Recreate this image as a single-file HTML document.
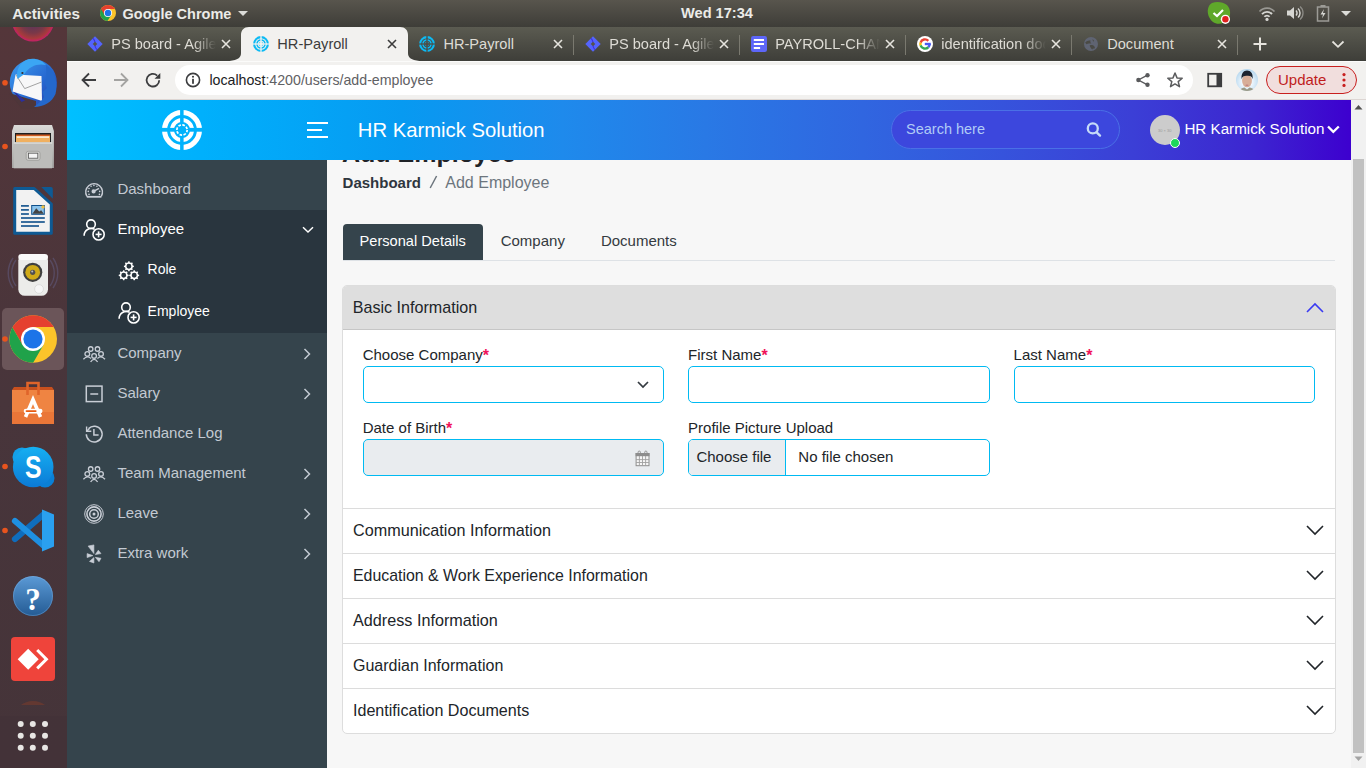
<!DOCTYPE html>
<html><head><meta charset="utf-8">
<style>
*{box-sizing:border-box;margin:0;padding:0}
html,body{width:1366px;height:768px;overflow:hidden;background:#f7f7f7;font-family:"Liberation Sans",sans-serif}
.a{position:absolute}
.t{position:absolute;white-space:nowrap;line-height:1}
.tt{overflow:hidden;line-height:1.2;-webkit-mask-image:linear-gradient(90deg,#000 78%,transparent 100%)}
/* ubuntu top bar */
#topbar{left:0;top:0;width:1366px;height:27px;background:linear-gradient(#58554d,#3e3d38)}
#dock{left:0;top:27px;width:67px;height:741px;background:linear-gradient(#54363a,#48353b 50%,#453439)}
#tabstrip{left:67px;top:27px;width:1299px;height:34px;background:linear-gradient(#5b5b51,#3e3e39)}
#toolbar{left:67px;top:61px;width:1299px;height:39px;background:#f2f1ef;border-top:1px solid #fbfbfa}
/* app */
#hdr{left:67px;top:100px;width:1284px;height:60px;background:linear-gradient(90deg,#00c0ff 0px,#00b0fc 135px,#079af1 335px,#1e8aec 495px,#2979e5 638px,#3066e0 795px,#3653dc 935px,#3b3fd6 1065px,#3c26d0 1185px,#3d00cf 1284px)}
#side{left:67px;top:160px;width:260px;height:608px;background:#35444c}
#content{left:327px;top:160px;width:1024px;height:608px;background:#f7f7f7;overflow:hidden}
#sbar{left:1351px;top:100px;width:15px;height:668px;background:#f1f1f1}
</style></head>
<body>
<div id="topbar" class="a"></div>
<div id="dock" class="a"></div>
<div id="tabstrip" class="a"></div>
<div id="toolbar" class="a"></div>
<div class="a" style="left:67px;top:99px;width:1299px;height:1px;background:#ddd6d3"></div>
<!-- ===== dock ===== -->
<svg class="a" style="left:0;top:27px" width="67" height="741" viewBox="0 0 67 741">
 <defs>
  <radialGradient id="ffx" cx="33" cy="-6.5" r="21" gradientUnits="userSpaceOnUse"><stop offset="0" stop-color="#4a3560"/><stop offset=".6" stop-color="#7a3848"/><stop offset=".86" stop-color="#a83a3c"/><stop offset="1" stop-color="#c81e6a"/></radialGradient>
  <linearGradient id="tbb" x1="0" y1="0" x2="1" y2="1"><stop offset="0" stop-color="#3f9ef0"/><stop offset=".6" stop-color="#2566d0"/><stop offset="1" stop-color="#2a3aa8"/></linearGradient>
  <linearGradient id="fil" x1="0" y1="0" x2="0" y2="1"><stop offset="0" stop-color="#dadad8"/><stop offset="1" stop-color="#a4a4a2"/></linearGradient>
  <linearGradient id="skp" x1="0" y1="0" x2="0" y2="1"><stop offset="0" stop-color="#16b0f2"/><stop offset="1" stop-color="#0b7ad6"/></linearGradient>
  <linearGradient id="hlp" x1="0" y1="0" x2="0" y2="1"><stop offset="0" stop-color="#5b9ad6"/><stop offset="1" stop-color="#245b94"/></linearGradient>
  <linearGradient id="vsc" x1="0" y1="0" x2="1" y2="0"><stop offset="0" stop-color="#0a6fc0"/><stop offset="1" stop-color="#2aa4f0"/></linearGradient>
 </defs>
 <!-- partial top icon -->
 <circle cx="33" cy="-6.5" r="21" fill="url(#ffx)"/>
 <!-- thunderbird -->
 <circle cx="5" cy="55.8" r="2.8" fill="#e8541e"/>
 <g transform="translate(0 -27)">
 <circle cx="33.3" cy="82.7" r="23.6" fill="url(#tbb)"/>
 <path d="M9 93 L22 109 L36 109 L36 101 Z" fill="#4e363a"/>
 <path d="M11.5 89 L21.5 102 L25 100.5 L14 91 Z" fill="#2b2f9e"/>
 <path d="M15.5 74.5 L41.5 76 L42 101 L12.5 91.5 Z" fill="#f7f7f8"/>
 <path d="M15.9 74.7 L24.7 88.6 L41.5 82" fill="none" stroke="#8c8c8c" stroke-width=".8"/>
 <path d="M17.5 79 C15.5 70 20 62 28 59.2 C35 57.5 42 60 46 65 C38 63 29 66 24.5 74 Z" fill="#3ba6f4"/>
 <circle cx="22.4" cy="73" r="1.1" fill="#3a2a2a"/>
 <path d="M46 65 C55 71 58.5 83 55.5 94 C52 102 44 107 34 107 L41 101 L44 97 L42.5 92 L47 88 L44.5 83 L46.5 78 Z" fill="#2468cc"/>
 </g>
 <!-- files -->
 <circle cx="5" cy="119.5" r="2.8" fill="#e8541e"/>
 <path d="M14 98 H52 L53.9 104 V141 H12 V104 Z" fill="url(#fil)"/>
 <rect x="15" y="106" width="36" height="9.5" fill="#1e1e1e"/>
 <rect x="16" y="108" width="34" height="7.5" fill="#f0b060"/>
 <rect x="17" y="109.5" width="32" height="1.2" fill="#fff"/>
 <rect x="16" y="107.5" width="34" height="1.5" fill="#d05a20"/>
 <rect x="13.7" y="115.4" width="38.3" height="25.9" fill="#bcbcba"/>
 <rect x="13.7" y="115.4" width="38.3" height="1.2" fill="#e4e4e2"/>
 <rect x="26.2" y="124.3" width="13.8" height="9" rx="2" fill="#d2d2d0" stroke="#9a9a98" stroke-width=".8"/>
 <rect x="28.4" y="126.2" width="9.4" height="5" fill="#f4f4f4" stroke="#555" stroke-width=".8"/>
 <!-- writer -->
 <path d="M14.7 161.5 H34.2 L51.3 177 V206.2 H14.7 Z" fill="#f2f2f2" stroke="#0e5a94" stroke-width="3" stroke-linejoin="round"/>
 <path d="M41.3 160 H51 Q52.8 160 52.8 162 V171.8 Z" fill="#0e5a94"/>
 <g fill="#0e4f8a"><rect x="21" y="178.1" width="7.9" height="1.6"/><rect x="21" y="182.1" width="7.9" height="1.6"/><rect x="21" y="186.2" width="7.9" height="1.6"/>
 <rect x="21" y="190.2" width="23.8" height="1.6"/><rect x="21" y="194.2" width="23.8" height="1.6"/><rect x="21" y="198.2" width="18" height="1.6"/>
 <rect x="31.2" y="178" width="13.6" height="9.8"/></g>
 <rect x="32.2" y="179" width="11.6" height="7.8" fill="#8cc4ec"/>
 <path d="M32.4 186.8 L36.2 181.2 L39.2 184.6 L41.2 183.2 L43.8 186.8 Z" fill="#444"/>
 <circle cx="43" cy="179.9" r="1.7" fill="#f0c040"/>
 <!-- speaker -->
 <path d="M16 233 A22 22 0 0 0 16 259 M13 231 A26 26 0 0 0 13 261 M50 233 A22 22 0 0 1 50 259 M53 231 A26 26 0 0 1 53 261" fill="none" stroke="#6a6a98" stroke-width="1.4" opacity=".4"/>
 <rect x="18.3" y="227" width="29.7" height="41.8" rx="6.5" fill="#ececea"/>
 <rect x="18.3" y="227" width="29.7" height="6" rx="3" fill="#fafafa"/>
 <circle cx="32.7" cy="245.3" r="9.6" fill="#404040"/><circle cx="32.7" cy="245.3" r="7.4" fill="#d0aa18"/><circle cx="32.7" cy="245.3" r="2.6" fill="#505050"/><circle cx="32.2" cy="244.6" r="1" fill="#bbb"/>
 <circle cx="39" cy="262" r="4.4" fill="#f6f6f6" stroke="#d0d0d0" stroke-width=".6"/>
 <!-- chrome (active) -->
 <rect x="2" y="281" width="62" height="62" rx="5" fill="#6b5559"/>
 <circle cx="5" cy="312" r="2.8" fill="#e8541e"/>
 <clipPath id="chc"><circle cx="33.2" cy="312" r="23.8"/></clipPath>
 <g clip-path="url(#chc)">
  <rect x="5" y="285" width="60" height="60" fill="#fcc42a"/>
  <path d="M33 300 L70 300 L70 260 L-5 260 L-5 270.2 L22.6 318 Z" fill="#e5402f"/>
  <path d="M22.6 318 L-5 270.2 L-5 370 L13.4 370 L43.4 318 Z" fill="#20a24a"/>
 </g>
 <circle cx="33" cy="312" r="12" fill="#fff"/><circle cx="33" cy="312" r="9.6" fill="#1c74e8"/>
 <!-- software -->
 <path d="M12 363 L14 360 H52 L54 363 Z" fill="#c8501e"/>
 <rect x="12" y="363" width="42" height="34" fill="#ee7c3a"/>
 <rect x="12" y="363" width="42" height="22" fill="#f08a48" opacity=".6"/>
 <rect x="12" y="385" width="42" height="12" fill="#ea7638"/>
 <path d="M27.5 368 V356 H38.5 V368" fill="none" stroke="#e0642a" stroke-width="2.6"/>
 <path d="M25.5 390 L33 372.5 L40.5 390" fill="none" stroke="#fff" stroke-width="3.6"/>
 <rect x="23.7" y="381.8" width="18.8" height="4.6" rx="2.3" fill="#fff"/>
 <rect x="25.6" y="383.2" width="11" height="1.8" rx=".9" fill="#e85a10"/>
 <!-- skype -->
 <circle cx="5" cy="439.5" r="2.8" fill="#e8541e"/>
 <circle cx="22" cy="430" r="9.5" fill="#14a0e8"/><circle cx="45" cy="451" r="9.5" fill="#0a80d6"/>
 <circle cx="33.2" cy="440" r="20.3" fill="url(#skp)"/>
 <text x="0" y="0" transform="translate(33.3 451.3) scale(.8 1)" font-family="Liberation Sans" font-weight="bold" font-size="31" fill="#fff" text-anchor="middle">S</text>
 <!-- vscode -->
 <circle cx="5" cy="503.5" r="2.8" fill="#e8541e"/>
 <path d="M15 512 L44 487" stroke="#0f6dbd" stroke-width="6.2" stroke-linecap="round"/>
 <path d="M15 494 L44 519" stroke="#1e90e2" stroke-width="6.2" stroke-linecap="round"/>
 <path d="M42 482.5 L54 487.5 V519.5 L42 524.5 Z" fill="#2aa0f0"/>
 <!-- help -->
 <circle cx="33" cy="569" r="20" fill="url(#hlp)"/>
 <text x="33" y="583" font-family="Liberation Serif" font-weight="bold" font-size="31" fill="#fff" text-anchor="middle">?</text>
 <circle cx="33" cy="569" r="19.5" fill="none" stroke="#8ab8e8" stroke-width=".6" opacity=".6"/>
 <!-- anydesk -->
 <rect x="11" y="610" width="44" height="44" rx="4" fill="#ef443b"/>
 <path d="M17.7 632.2 L28.2 621.7 L38.7 632.2 L28.2 642.7 Z" fill="#fff"/>
 <polyline points="37.2,623 46.4,632.2 37.2,641.4" fill="none" stroke="#fff" stroke-width="3"/>
 <!-- partial -->
 <path d="M21 678 A14 8 0 0 1 45 678 Z" fill="#6a3a30" opacity=".8"/>
 <rect x="0" y="689" width="67" height="52" fill="#3f3237" opacity=".35"/>
 <g fill="#e8e6e4"><circle cx="20.7" cy="697" r="3"/><circle cx="32.8" cy="697" r="3"/><circle cx="45" cy="697" r="3"/><circle cx="20.7" cy="708.8" r="3"/><circle cx="32.8" cy="708.8" r="3"/><circle cx="45" cy="708.8" r="3"/><circle cx="20.7" cy="720.7" r="3"/><circle cx="32.8" cy="720.7" r="3"/><circle cx="45" cy="720.7" r="3"/></g>
</svg>
<!-- ===== ubuntu top bar content ===== -->
<div class="t" style="left:12.3px;top:6.2px;font-size:15.2px;font-weight:bold;color:#ebebe8">Activities</div>
<svg class="a" style="left:100px;top:5px" width="16" height="16" viewBox="21 288 24 24">
 <defs><clipPath id="chc2"><circle cx="33" cy="300" r="12"/></clipPath></defs>
 <g clip-path="url(#chc2)">
  <rect x="15" y="280" width="40" height="40" fill="#fcc42a"/>
  <path d="M33 294 L60 294 L60 270 L0 270 L0 285 L27.8 303 Z" fill="#e5402f"/>
  <path d="M27.8 303 L9 270.4 L0 330 L20 330 L38.2 303 Z" fill="#20a24a"/>
 </g>
 <circle cx="33" cy="300" r="6" fill="#fff"/><circle cx="33" cy="300" r="4.8" fill="#1c74e8"/>
</svg>
<div class="t" style="left:122.6px;top:7.2px;font-size:14.5px;font-weight:bold;color:#ebebe8">Google Chrome</div>
<svg class="a" style="left:237px;top:10px" width="12" height="7" viewBox="0 0 12 7"><path d="M1 1 H11 L6 6 Z" fill="#dcdcd8"/></svg>
<div class="t" style="left:681px;top:6px;font-size:14.6px;font-weight:bold;color:#ebebe8">Wed 17:34</div>
<svg class="a" style="left:1206px;top:1px" width="26" height="25" viewBox="0 0 26 25">
 <path d="M6 2 C11 0 17 1 21 4 C25 8 25 15 22 19 C18 23 11 24 7 21 C3 18 1 12 2 8 C2.5 5 4 3 6 2 Z" fill="#5fa82a"/>
 <polyline points="7.5,12 11,15 17,9" fill="none" stroke="#fff" stroke-width="2.2"/>
 <circle cx="19.4" cy="18.3" r="4.6" fill="#fff"/><circle cx="19.4" cy="18.3" r="3.2" fill="#e0201e"/>
</svg>
<svg class="a" style="left:1258px;top:6px" width="18" height="16" viewBox="0 0 18 16" fill="none" stroke="#d6d6d2">
 <path d="M1.5 5.5 A10 10 0 0 1 16.5 5.5" stroke-width="1.6" opacity=".55"/><path d="M4 8.2 A6.5 6.5 0 0 1 14 8.2" stroke-width="1.8"/><path d="M6.4 10.8 A3.3 3.3 0 0 1 11.6 10.8" stroke-width="1.8"/><circle cx="9" cy="13.4" r="1.6" fill="#d6d6d2" stroke="none"/>
</svg>
<svg class="a" style="left:1286px;top:5px" width="18" height="16" viewBox="0 0 18 16">
 <path d="M1 5.5 H4 L8 2 V14 L4 10.5 H1 Z" fill="#d6d6d2"/>
 <path d="M10 5.5 A3.5 3.5 0 0 1 10 10.5" fill="none" stroke="#d6d6d2" stroke-width="1.5"/><path d="M12 3.5 A6 6 0 0 1 12 12.5" fill="none" stroke="#d6d6d2" stroke-width="1.5"/><path d="M14 1.5 A8.5 8.5 0 0 1 14 14.5" fill="none" stroke="#8c8b86" stroke-width="1.3"/>
</svg>
<svg class="a" style="left:1316px;top:4px" width="14" height="18" viewBox="0 0 14 18">
 <rect x="1.5" y="3" width="11" height="14" fill="none" stroke="#9c9b96" stroke-width="1.5"/><rect x="4.5" y="1" width="5" height="2" fill="#9c9b96"/>
 <path d="M8 5 L4.5 10.5 H7 L6 14.5 L9.5 9 H7 Z" fill="#d6d6d2"/>
</svg>
<svg class="a" style="left:1340px;top:10px" width="12" height="7" viewBox="0 0 12 7"><path d="M1 1 H11 L6 6 Z" fill="#dcdcd8"/></svg>

<!-- ===== chrome tabs ===== -->
<svg class="a" style="left:225px;top:27px" width="200" height="34" viewBox="0 0 200 34"><path d="M0 34 C5 34 16 34 16 26 V8 C16 3 19 0 24 0 H175 C180 0 183 3 183 8 V26 C183 34 194 34 199 34 Z" fill="#f2f1ef"/></svg>
<div class="a" style="left:573px;top:35px;width:1px;height:20px;background:#7a796f"></div>
<div class="a" style="left:739px;top:35px;width:1px;height:20px;background:#7a796f"></div>
<div class="a" style="left:905px;top:35px;width:1px;height:20px;background:#7a796f"></div>
<div class="a" style="left:1071px;top:35px;width:1px;height:20px;background:#7a796f"></div>
<div class="a" style="left:1237px;top:35px;width:1px;height:20px;background:#7a796f"></div>
<!-- tab 1 -->
<svg class="a" style="left:87px;top:36px" width="16" height="16" viewBox="0 0 16 16"><path d="M8 0.3 L15.7 8 L8 15.7 L0.3 8 Z" fill="#5464fc"/><path d="M6.3 2 C7.6 3 8 4.6 8.6 6.2 L7.6 6.8 C7.2 5 6.6 3.6 5.6 2.7 Z" fill="#3a1fd8" opacity=".8"/><path d="M9.7 14 C8.4 13 8 11.4 7.4 9.8 L8.4 9.2 C8.8 11 9.4 12.4 10.4 13.3 Z" fill="#3a1fd8" opacity=".8"/><path d="M8 5.7 L10.3 8 L8 10.3 L5.7 8 Z" fill="#54534a"/></svg>
<div class="t tt" style="left:111.2px;top:36.1px;width:105px;font-size:14.6px;color:#dedcd5">PS board - Agile</div>
<svg class="a" style="left:221px;top:39px" width="10" height="10" viewBox="0 0 10 10"><path d="M1 1 L9 9 M9 1 L1 9" stroke="#e6e4de" stroke-width="1.6"/></svg>
<!-- tab 2 active -->
<svg class="a" style="left:253px;top:36px" width="16" height="16" viewBox="0 0 16 16"><g fill="none" stroke="#0cbaf4"><circle cx="8" cy="8" r="6.9" stroke-width="2.1"/><circle cx="8" cy="8" r="4" stroke-width="1.6"/><circle cx="8" cy="8" r="2.1" stroke-width=".8" opacity=".7"/></g><path d="M7.2 0 H8.8 V16 H7.2 Z M0 7.2 H16 V8.8 H0 Z" fill="#f2f1ef" opacity=".85"/></svg>
<div class="t" style="left:277.3px;top:36.6px;font-size:14.6px;color:#3c3c3c">HR-Payroll</div>
<svg class="a" style="left:387px;top:39px" width="10" height="10" viewBox="0 0 10 10"><path d="M1 1 L9 9 M9 1 L1 9" stroke="#3c3c3c" stroke-width="1.6"/></svg>
<!-- tab 3 -->
<svg class="a" style="left:419px;top:36px" width="16" height="16" viewBox="0 0 16 16"><g fill="none" stroke="#0cbaf4"><circle cx="8" cy="8" r="6.9" stroke-width="2.1"/><circle cx="8" cy="8" r="4" stroke-width="1.6"/><circle cx="8" cy="8" r="2.1" stroke-width=".8" opacity=".7"/></g><path d="M7.2 0 H8.8 V16 H7.2 Z M0 7.2 H16 V8.8 H0 Z" fill="#4f4e46" opacity=".85"/></svg>
<div class="t" style="left:443.4px;top:36.6px;font-size:14.6px;color:#dedcd5">HR-Payroll</div>
<svg class="a" style="left:553px;top:39px" width="10" height="10" viewBox="0 0 10 10"><path d="M1 1 L9 9 M9 1 L1 9" stroke="#e6e4de" stroke-width="1.6"/></svg>
<!-- tab 4 -->
<svg class="a" style="left:585px;top:36px" width="16" height="16" viewBox="0 0 16 16"><path d="M8 0.3 L15.7 8 L8 15.7 L0.3 8 Z" fill="#5464fc"/><path d="M6.3 2 C7.6 3 8 4.6 8.6 6.2 L7.6 6.8 C7.2 5 6.6 3.6 5.6 2.7 Z" fill="#3a1fd8" opacity=".8"/><path d="M9.7 14 C8.4 13 8 11.4 7.4 9.8 L8.4 9.2 C8.8 11 9.4 12.4 10.4 13.3 Z" fill="#3a1fd8" opacity=".8"/><path d="M8 5.7 L10.3 8 L8 10.3 L5.7 8 Z" fill="#54534a"/></svg>
<div class="t tt" style="left:609.2px;top:36.1px;width:105px;font-size:14.6px;color:#dedcd5">PS board - Agile</div>
<svg class="a" style="left:719px;top:39px" width="10" height="10" viewBox="0 0 10 10"><path d="M1 1 L9 9 M9 1 L1 9" stroke="#e6e4de" stroke-width="1.6"/></svg>
<!-- tab 5 -->
<svg class="a" style="left:751px;top:36px" width="16" height="16" viewBox="0 0 16 16"><rect x="0" y="0" width="16" height="16" rx="2.2" fill="#5d66f8"/><rect x="2.8" y="3" width="10.2" height="2" fill="#fff"/><rect x="2.8" y="7" width="10.2" height="2" fill="#fff"/><rect x="2.8" y="11" width="6.3" height="2" fill="#fff"/></svg>
<div class="t tt" style="left:775.2px;top:36.1px;width:105px;font-size:14.6px;color:#dedcd5">PAYROLL-CHANGES</div>
<svg class="a" style="left:885px;top:39px" width="10" height="10" viewBox="0 0 10 10"><path d="M1 1 L9 9 M9 1 L1 9" stroke="#e6e4de" stroke-width="1.6"/></svg>
<!-- tab 6 -->
<svg class="a" style="left:917px;top:36px" width="16" height="16" viewBox="0 0 16 16"><circle cx="8" cy="8" r="8" fill="#fff"/>
 <g fill="none" stroke-width="2.4"><path d="M11.3 4.8 A4.6 4.6 0 0 0 3.6 6.6" stroke="#ea4335"/><path d="M3.6 6.6 A4.6 4.6 0 0 0 3.6 9.4" stroke="#fbbc05"/><path d="M3.6 9.4 A4.6 4.6 0 0 0 11.4 11.1" stroke="#34a853"/><path d="M11.4 11.1 A4.6 4.6 0 0 0 12.6 8" stroke="#4a5af0"/></g>
 <rect x="7.8" y="6.8" width="6" height="2.4" fill="#4a5af0"/>
</svg>
<div class="t tt" style="left:941.2px;top:36.1px;width:105px;font-size:14.6px;color:#dedcd5">identification documents</div>
<svg class="a" style="left:1051px;top:39px" width="10" height="10" viewBox="0 0 10 10"><path d="M1 1 L9 9 M9 1 L1 9" stroke="#e6e4de" stroke-width="1.6"/></svg>
<!-- tab 7 -->
<svg class="a" style="left:1083px;top:36px" width="16" height="16" viewBox="0 0 16 16"><circle cx="8" cy="8" r="7" fill="#5f6472"/><path d="M2.2 6.6 C3.5 5 5.5 4 7.6 4.6 C7 5.6 7.2 6.8 8.4 7.2 C6.8 7.6 5 7.4 3.6 8.2 C3 7.8 2.5 7.2 2.2 6.6 Z M6.6 9.4 C8.2 9 9.8 8.6 10.8 9.8 C11.8 10.8 12.2 11.8 11.6 12.6 C10.4 12.2 9.6 12.6 9.2 13.6 C8.2 12.6 7.2 11 6.6 9.4 Z M9.4 3.2 C10.6 3.6 11.4 4.6 10.6 5.8 C10 5.2 9.6 4.4 9.4 3.2Z" fill="#4a4a44"/></svg>
<div class="t" style="left:1107.2px;top:36.6px;font-size:14.6px;color:#dedcd5">Document</div>
<svg class="a" style="left:1217px;top:39px" width="10" height="10" viewBox="0 0 10 10"><path d="M1 1 L9 9 M9 1 L1 9" stroke="#e6e4de" stroke-width="1.6"/></svg>
<svg class="a" style="left:1252px;top:36px" width="16" height="16" viewBox="0 0 16 16"><path d="M8 1.5 V14.5 M1.5 8 H14.5" stroke="#e6e4de" stroke-width="2"/></svg>
<svg class="a" style="left:1331px;top:40px" width="14" height="9" viewBox="0 0 14 9"><polyline points="1.5,1.5 7,6.8 12.5,1.5" fill="none" stroke="#e6e4de" stroke-width="1.8"/></svg>

<!-- ===== chrome toolbar ===== -->
<svg class="a" style="left:80px;top:71px" width="18" height="18" viewBox="0 0 18 18"><path d="M16 9 H3 M9 2.5 L2.5 9 L9 15.5" fill="none" stroke="#3c3d3f" stroke-width="1.8"/></svg>
<svg class="a" style="left:112px;top:71px" width="18" height="18" viewBox="0 0 18 18"><path d="M2 9 H15 M9 2.5 L15.5 9 L9 15.5" fill="none" stroke="#a3a3a1" stroke-width="1.8"/></svg>
<svg class="a" style="left:144px;top:71px" width="18" height="18" viewBox="0 0 18 18"><path d="M15.2 9.2 A6.3 6.3 0 1 1 13.2 4.6" fill="none" stroke="#3c3d3f" stroke-width="1.8"/><path d="M16.3 2 V7.8 H10.5 Z" fill="#3c3d3f"/></svg>
<div class="a" style="left:175px;top:65px;width:1018px;height:30px;border-radius:15px;background:#fff"></div>
<svg class="a" style="left:185px;top:72px" width="16" height="16" viewBox="0 0 16 16"><circle cx="8" cy="8" r="6.6" fill="none" stroke="#3c3d3f" stroke-width="1.6"/><rect x="7.1" y="6.8" width="1.8" height="5" fill="#3c3d3f"/><circle cx="8" cy="4.7" r="1.05" fill="#3c3d3f"/></svg>
<div class="t" style="left:209.4px;top:72.6px;font-size:14.2px;color:#5f6164"><span style="color:#202124">localhost</span>:4200/users/add-employee</div>
<svg class="a" style="left:1135px;top:72px" width="16" height="16" viewBox="0 0 16 16"><g fill="#5a5b5d"><circle cx="12.5" cy="3.2" r="2.2"/><circle cx="3.4" cy="8" r="2.2"/><circle cx="12.5" cy="12.8" r="2.2"/></g><path d="M12.5 3.2 L3.4 8 L12.5 12.8" fill="none" stroke="#5a5b5d" stroke-width="1.4"/></svg>
<svg class="a" style="left:1166px;top:71px" width="18" height="18" viewBox="0 0 18 18"><path d="M9 2 L11 6.9 L16.2 7.2 L12.2 10.6 L13.5 15.7 L9 12.9 L4.5 15.7 L5.8 10.6 L1.8 7.2 L7 6.9 Z" fill="none" stroke="#5a5b5d" stroke-width="1.5" stroke-linejoin="round"/></svg>
<svg class="a" style="left:1206px;top:71px" width="18" height="18" viewBox="0 0 18 18"><rect x="2.2" y="2.8" width="13" height="12.5" fill="none" stroke="#3c3d3f" stroke-width="1.8"/><rect x="10.5" y="2.8" width="4.7" height="12.5" fill="#3c3d3f"/></svg>
<svg class="a" style="left:1236px;top:69px" width="22" height="22" viewBox="0 0 22 22">
 <defs><clipPath id="avc"><circle cx="11" cy="11" r="11"/></clipPath><radialGradient id="avg" cx=".5" cy=".6" r=".6"><stop offset=".3" stop-color="#f6fbff"/><stop offset="1" stop-color="#b4d6ee"/></radialGradient></defs>
 <g clip-path="url(#avc)"><rect width="22" height="22" fill="url(#avg)"/>
 <ellipse cx="11" cy="12" rx="4.9" ry="6.3" fill="#d8ae98"/>
 <path d="M5.6 10 C5 5 7.5 1.6 11 1.6 C14.8 1.6 17.2 4.5 16.6 10 C15.8 7.6 14.5 6.6 11.2 6.8 C8 6.6 6.4 7.6 5.6 10Z" fill="#1c2430"/>
 <ellipse cx="11" cy="16.2" rx="1.6" ry=".7" fill="#c08080"/>
 <path d="M3 22 C4 19.5 7 18.8 8.5 18.5 L11 20.5 L13.5 18.5 C15 18.8 18 19.5 19 22Z" fill="#9a9a88"/></g>
</svg>
<div class="a" style="left:1266px;top:66px;width:91px;height:28px;border-radius:14px;background:#f1dedd;border:1.5px solid #c81f1f"></div>
<div class="t" style="left:1278px;top:72.4px;font-size:15px;color:#c01c1c">Update</div>
<svg class="a" style="left:1341px;top:72px" width="6" height="16" viewBox="0 0 6 16"><g fill="#c81f1f"><circle cx="3" cy="2.6" r="1.6"/><circle cx="3" cy="8" r="1.6"/><circle cx="3" cy="13.4" r="1.6"/></g></svg>
<div id="hdr" class="a"></div>
<div id="side" class="a"></div>
<div id="content" class="a">
 <div class="t" style="left:15px;top:-18.9px;font-size:25px;font-weight:bold;color:#1f2328">Add Employee</div>
</div>
<!-- breadcrumb -->
<div class="t" style="left:342.6px;top:174.8px;font-size:15px;font-weight:bold;color:#2f363e">Dashboard</div>
<svg class="a" style="left:428px;top:175px" width="11" height="15" viewBox="0 0 11 15"><path d="M2.2 13 L8.6 1" stroke="#6c757d" stroke-width="1.5"/></svg>
<div class="t" style="left:445.3px;top:175px;font-size:16px;color:#6c757d">Add Employee</div>
<!-- tabs -->
<div class="a" style="left:343px;top:260px;width:992px;height:1px;background:#dee2e6"></div>
<div class="a" style="left:343px;top:224px;width:140px;height:36px;background:#35444c;border-radius:4px 4px 0 0"></div>
<div class="t" style="left:359.6px;top:233.9px;font-size:14.6px;color:#fff">Personal Details</div>
<div class="t" style="left:500.7px;top:232.8px;font-size:15px;color:#343a40">Company</div>
<div class="t" style="left:600.9px;top:232.8px;font-size:15px;color:#343a40">Documents</div>
<!-- card -->
<div class="a" style="left:342px;top:285px;width:994px;height:449px;border:1px solid #dddddd;border-radius:5px;background:#fff;overflow:hidden">
 <div class="a" style="left:0;top:0;width:992px;height:44px;background:#dedede;border-bottom:1px solid #c6c6c6"></div>
 <div class="a" style="left:0;top:222px;width:992px;height:1px;background:#dcdcdc"></div>
 <div class="a" style="left:0;top:267px;width:992px;height:1px;background:#dcdcdc"></div>
 <div class="a" style="left:0;top:312px;width:992px;height:1px;background:#dcdcdc"></div>
 <div class="a" style="left:0;top:357px;width:992px;height:1px;background:#dcdcdc"></div>
 <div class="a" style="left:0;top:402px;width:992px;height:1px;background:#dcdcdc"></div>
</div>
<div class="t" style="left:352.8px;top:299.3px;font-size:16.1px;color:#212529">Basic Information</div>
<svg class="a" style="left:1305px;top:301px" width="20" height="13" viewBox="0 0 20 13"><polyline points="2,11 10,3 18,11" fill="none" stroke="#3a3af2" stroke-width="1.6"/></svg>
<div class="t" style="left:353px;top:521.6px;font-size:16.2px;color:#212529">Communication Information</div>
<div class="t" style="left:353px;top:567.6px;font-size:15.9px;color:#212529">Education &amp; Work Experience Information</div>
<div class="t" style="left:353px;top:611.6px;font-size:16.2px;color:#212529">Address Information</div>
<div class="t" style="left:353px;top:657.6px;font-size:16px;color:#212529">Guardian Information</div>
<div class="t" style="left:353px;top:701.6px;font-size:16.1px;color:#212529">Identification Documents</div>
<svg class="a" style="left:1305px;top:524px" width="20" height="13" viewBox="0 0 20 13"><polyline points="2,2 10,10 18,2" fill="none" stroke="#212529" stroke-width="1.6"/></svg>
<svg class="a" style="left:1305px;top:569px" width="20" height="13" viewBox="0 0 20 13"><polyline points="2,2 10,10 18,2" fill="none" stroke="#212529" stroke-width="1.6"/></svg>
<svg class="a" style="left:1305px;top:614px" width="20" height="13" viewBox="0 0 20 13"><polyline points="2,2 10,10 18,2" fill="none" stroke="#212529" stroke-width="1.6"/></svg>
<svg class="a" style="left:1305px;top:659px" width="20" height="13" viewBox="0 0 20 13"><polyline points="2,2 10,10 18,2" fill="none" stroke="#212529" stroke-width="1.6"/></svg>
<svg class="a" style="left:1305px;top:704px" width="20" height="13" viewBox="0 0 20 13"><polyline points="2,2 10,10 18,2" fill="none" stroke="#212529" stroke-width="1.6"/></svg>
<!-- form -->
<div class="t" style="left:362.7px;top:347.2px;font-size:15px;color:#212529">Choose Company<span style="color:#f0145a;font-weight:bold;font-size:16px;position:relative;top:1px">*</span></div>
<div class="t" style="left:688.1px;top:347.2px;font-size:15px;color:#212529">First Name<span style="color:#f0145a;font-weight:bold;font-size:16px;position:relative;top:1px">*</span></div>
<div class="t" style="left:1013.6px;top:347.2px;font-size:15px;color:#212529">Last Name<span style="color:#f0145a;font-weight:bold;font-size:16px;position:relative;top:1px">*</span></div>
<div class="t" style="left:362.7px;top:420.2px;font-size:15px;color:#212529">Date of Birth<span style="color:#f0145a;font-weight:bold;font-size:16px;position:relative;top:1px">*</span></div>
<div class="t" style="left:688.1px;top:420.2px;font-size:15px;color:#212529">Profile Picture Upload</div>
<div class="a" style="left:363px;top:366px;width:301px;height:37px;border:1px solid #00baf2;border-radius:5px;background:#fff"></div>
<svg class="a" style="left:636px;top:380px" width="14" height="10" viewBox="0 0 14 10"><polyline points="2,2 7,7 12,2" fill="none" stroke="#343a40" stroke-width="1.7"/></svg>
<div class="a" style="left:688px;top:366px;width:302px;height:37px;border:1px solid #00baf2;border-radius:5px;background:#fff"></div>
<div class="a" style="left:1014px;top:366px;width:301px;height:37px;border:1px solid #00baf2;border-radius:5px;background:#fff"></div>
<div class="a" style="left:363px;top:439px;width:301px;height:37px;border:1px solid #00baf2;border-radius:5px;background:#e9ecef"></div>
<svg class="a" style="left:635px;top:450px" width="15" height="17" viewBox="0 0 15 17">
 <rect x="1.1" y="3.5" width="12.9" height="12.2" fill="#f6f6f6" stroke="#8d8d8d"/>
 <rect x="0.6" y="3" width="13.9" height="3.2" fill="#8d8d8d"/>
 <path d="M4.4 6 V15.5 M7.5 6 V15.5 M10.6 6 V15.5 M1 9.6 H14 M1 12.5 H14" stroke="#a0a0a0" stroke-width=".9"/>
 <path d="M3.1 4 V2.2 A1.15 1.15 0 0 1 5.4 2.2 V4 M9.7 4 V2.2 A1.15 1.15 0 0 1 12 2.2 V4" fill="none" stroke="#8d8d8d" stroke-width=".9"/>
</svg>
<div class="a" style="left:688px;top:439px;width:302px;height:37px;border:1px solid #00baf2;border-radius:5px;background:#fff;overflow:hidden">
 <div class="a" style="left:0;top:0;width:97px;height:35px;background:#e9ecef;border-right:1px solid #00baf2"></div>
</div>
<div class="t" style="left:696.4px;top:448.8px;font-size:15px;color:#212529">Choose file</div>
<div class="t" style="left:798.3px;top:448.8px;font-size:15px;color:#212529">No file chosen</div>
<div id="sbar" class="a"></div>
<div class="a" style="left:1353px;top:159px;width:11px;height:594px;background:#c1c1c1"></div>
<svg class="a" style="left:1353px;top:103px" width="11" height="8" viewBox="0 0 11 8"><path d="M1.5 6.5 H9.5 L5.5 2 Z" fill="#505050"/></svg>
<svg class="a" style="left:1353px;top:755px" width="11" height="8" viewBox="0 0 11 8"><path d="M1.5 1.5 H9.5 L5.5 6 Z" fill="#a3a3a3"/></svg>

<!-- ===== header content ===== -->
<svg class="a" style="left:162px;top:110px" width="40" height="40" viewBox="0 0 40 40">
 <defs><mask id="lm"><rect width="40" height="40" fill="#fff"/><rect x="18.1" y="0" width="3.5" height="40" fill="#000"/><rect x="0" y="17.9" width="40" height="3.8" fill="#000"/></mask></defs>
 <g mask="url(#lm)" fill="none" stroke="#fff">
  <circle cx="20" cy="20" r="17.45" stroke-width="5.1"/>
  <circle cx="20" cy="20" r="10" stroke-width="4"/>
 </g>
 <circle cx="20" cy="20" r="5.15" fill="none" stroke="#fff" stroke-width="1.7" stroke-dasharray="2.6 1.445" stroke-dashoffset="0.3"/>
</svg>
<div class="a" style="left:307px;top:122px;width:21px;height:2px;background:#fff"></div>
<div class="a" style="left:307px;top:129px;width:15px;height:2px;background:#fff"></div>
<div class="a" style="left:307px;top:136px;width:21px;height:2px;background:#fff"></div>
<div class="t" style="left:357.8px;top:119.8px;font-size:20.25px;color:#fff">HR Karmick Solution</div>
<div class="a" style="left:891px;top:110px;width:229px;height:39px;border-radius:20px;background:#3c47dd;border:1px solid #4a70e6"></div>
<div class="t" style="left:906px;top:121.6px;font-size:14.5px;color:#b0cbf6">Search here</div>
<svg class="a" style="left:1084px;top:120px" width="20" height="20" viewBox="0 0 20 20"><circle cx="8.8" cy="8.4" r="5" fill="none" stroke="#c5dbf8" stroke-width="2.3"/><line x1="12.4" y1="12.2" x2="16" y2="15.6" stroke="#c5dbf8" stroke-width="2.4" stroke-linecap="round"/></svg>
<div class="a" style="left:1150px;top:115px;width:30px;height:30px;border-radius:50%;background:#cccccc"></div>
<div class="t" style="left:1158px;top:128.6px;font-size:4px;color:#9a9a9a">30 × 30</div>
<div class="a" style="left:1170px;top:137.8px;width:10px;height:10px;border-radius:50%;background:#1ed75a;border:1.8px solid #fff"></div>
<div class="t" style="left:1184.4px;top:121px;font-size:15.2px;color:#fff">HR Karmick Solution</div>
<svg class="a" style="left:1326px;top:124px" width="15" height="10" viewBox="0 0 15 10"><polyline points="2,2.5 7.3,7.8 12.8,2.5" fill="none" stroke="#fff" stroke-width="2.3"/></svg>

<!-- ===== sidebar ===== -->
<div class="a" style="left:67px;top:210px;width:260px;height:123px;background:#29353e"></div>
<svg class="a" style="left:84px;top:181px" width="21" height="18" viewBox="0 0 21 18" fill="none" stroke="#c9ced6" stroke-width="1.4">
 <path d="M2.9 15.4 A8.4 8.4 0 1 1 17.3 15.4"/><line x1="2.8" y1="15.8" x2="17.4" y2="15.8" stroke-width="1.8"/>
 <line x1="9.6" y1="10.4" x2="15" y2="7.3" stroke-width="1.5"/><circle cx="9.6" cy="10.4" r="1.4" fill="#c9ced6"/>
 <g fill="#c9ced6" stroke="none"><circle cx="9.9" cy="4.4" r=".8"/><circle cx="7.1" cy="5.3" r=".8"/><circle cx="12.9" cy="5.3" r=".8"/><circle cx="5" cy="7.5" r=".8"/><circle cx="4.3" cy="10.4" r=".8"/><circle cx="5" cy="13.4" r=".8"/><circle cx="15.7" cy="10.4" r=".8"/><circle cx="15.4" cy="13.4" r=".8"/></g>
</svg>
<div class="t" style="left:117.4px;top:181px;font-size:15px;color:#c3cad2">Dashboard</div>
<svg class="a" style="left:82px;top:218px" width="24" height="24" viewBox="0 0 24 24" fill="none" stroke="#fff" stroke-width="1.6">
 <circle cx="9" cy="6.2" r="4.3"/><path d="M2.1 17.7 A7.2 7.2 0 0 1 12.6 11.3"/><circle cx="16.6" cy="16.4" r="5.6"/><line x1="16.6" y1="13.4" x2="16.6" y2="19.4"/><line x1="13.6" y1="16.4" x2="19.6" y2="16.4"/>
</svg>
<div class="t" style="left:117.4px;top:221.4px;font-size:15px;color:#fff">Employee</div>
<svg class="a" style="left:301px;top:225px" width="14" height="10" viewBox="0 0 14 10"><polyline points="2,2.2 7,7 12,2.2" fill="none" stroke="#fff" stroke-width="1.5"/></svg>
<svg class="a" style="left:117px;top:260px" width="24" height="22" viewBox="0 0 24 22"><path fill="#fff" fill-rule="evenodd" d="M15.60 7.83 L15.28 8.44 L15.85 9.36 L14.96 10.25 L14.04 9.68 L13.43 10.00 L12.77 10.20 L12.53 11.26 L11.27 11.26 L11.03 10.20 L10.37 10.00 L9.76 9.68 L8.84 10.25 L7.95 9.36 L8.52 8.44 L8.20 7.83 L8.00 7.17 L6.94 6.93 L6.94 5.67 L8.00 5.43 L8.20 4.77 L8.52 4.16 L7.95 3.24 L8.84 2.35 L9.76 2.92 L10.37 2.60 L11.03 2.40 L11.27 1.34 L12.53 1.34 L12.77 2.40 L13.43 2.60 L14.04 2.92 L14.96 2.35 L15.85 3.24 L15.28 4.16 L15.60 4.77 L15.80 5.43 L16.86 5.67 L16.86 6.93 L15.80 7.17 Z M14.35 6.30 A2.45 2.45 0 1 0 9.45 6.30 A2.45 2.45 0 1 0 14.35 6.30 Z M10.40 16.83 L10.08 17.44 L10.65 18.36 L9.76 19.25 L8.84 18.68 L8.23 19.00 L7.57 19.20 L7.33 20.26 L6.07 20.26 L5.83 19.20 L5.17 19.00 L4.56 18.68 L3.64 19.25 L2.75 18.36 L3.32 17.44 L3.00 16.83 L2.80 16.17 L1.74 15.93 L1.74 14.67 L2.80 14.43 L3.00 13.77 L3.32 13.16 L2.75 12.24 L3.64 11.35 L4.56 11.92 L5.17 11.60 L5.83 11.40 L6.07 10.34 L7.33 10.34 L7.57 11.40 L8.23 11.60 L8.84 11.92 L9.76 11.35 L10.65 12.24 L10.08 13.16 L10.40 13.77 L10.60 14.43 L11.66 14.67 L11.66 15.93 L10.60 16.17 Z M9.15 15.30 A2.45 2.45 0 1 0 4.25 15.30 A2.45 2.45 0 1 0 9.15 15.30 Z M20.90 16.83 L20.58 17.44 L21.15 18.36 L20.26 19.25 L19.34 18.68 L18.73 19.00 L18.07 19.20 L17.83 20.26 L16.57 20.26 L16.33 19.20 L15.67 19.00 L15.06 18.68 L14.14 19.25 L13.25 18.36 L13.82 17.44 L13.50 16.83 L13.30 16.17 L12.24 15.93 L12.24 14.67 L13.30 14.43 L13.50 13.77 L13.82 13.16 L13.25 12.24 L14.14 11.35 L15.06 11.92 L15.67 11.60 L16.33 11.40 L16.57 10.34 L17.83 10.34 L18.07 11.40 L18.73 11.60 L19.34 11.92 L20.26 11.35 L21.15 12.24 L20.58 13.16 L20.90 13.77 L21.10 14.43 L22.16 14.67 L22.16 15.93 L21.10 16.17 Z M19.65 15.30 A2.45 2.45 0 1 0 14.75 15.30 A2.45 2.45 0 1 0 19.65 15.30 Z"/></svg>
<div class="t" style="left:147.6px;top:262.2px;font-size:14px;color:#fff">Role</div>
<svg class="a" style="left:117px;top:301px" width="24" height="24" viewBox="0 0 24 24" fill="none" stroke="#fff" stroke-width="1.6">
 <circle cx="9" cy="6.2" r="4.3"/><path d="M2.1 17.7 A7.2 7.2 0 0 1 12.6 11.3"/><circle cx="16.6" cy="16.4" r="5.6"/><line x1="16.6" y1="13.4" x2="16.6" y2="19.4"/><line x1="13.6" y1="16.4" x2="19.6" y2="16.4"/>
</svg>
<div class="t" style="left:147.6px;top:304.3px;font-size:14px;color:#fff">Employee</div>

<div class="t" style="left:117.4px;top:345.4px;font-size:15px;color:#c3cad2">Company</div>
<div class="t" style="left:117.4px;top:385.3px;font-size:15px;color:#c3cad2">Salary</div>
<div class="t" style="left:117.4px;top:425.3px;font-size:15px;color:#c3cad2">Attendance Log</div>
<div class="t" style="left:117.4px;top:465.3px;font-size:15px;color:#c3cad2">Team Management</div>
<div class="t" style="left:117.4px;top:505.3px;font-size:15px;color:#c3cad2">Leave</div>
<div class="t" style="left:117.4px;top:545.3px;font-size:15px;color:#c3cad2">Extra work</div>
<svg class="a" style="left:302px;top:347px" width="10" height="14" viewBox="0 0 10 14"><polyline points="2.5,2 7.5,7 2.5,12" fill="none" stroke="#c3cad2" stroke-width="1.5"/></svg>
<svg class="a" style="left:302px;top:387px" width="10" height="14" viewBox="0 0 10 14"><polyline points="2.5,2 7.5,7 2.5,12" fill="none" stroke="#c3cad2" stroke-width="1.5"/></svg>
<svg class="a" style="left:302px;top:467px" width="10" height="14" viewBox="0 0 10 14"><polyline points="2.5,2 7.5,7 2.5,12" fill="none" stroke="#c3cad2" stroke-width="1.5"/></svg>
<svg class="a" style="left:302px;top:507px" width="10" height="14" viewBox="0 0 10 14"><polyline points="2.5,2 7.5,7 2.5,12" fill="none" stroke="#c3cad2" stroke-width="1.5"/></svg>
<svg class="a" style="left:302px;top:547px" width="10" height="14" viewBox="0 0 10 14"><polyline points="2.5,2 7.5,7 2.5,12" fill="none" stroke="#c3cad2" stroke-width="1.5"/></svg>

<svg class="a" style="left:82px;top:343px" width="24" height="22" viewBox="0 0 24 22" fill="none" stroke="#c9ced6" stroke-width="1.3">
 <circle cx="8.7" cy="6" r="2.25"/><circle cx="15.5" cy="6" r="2.25"/>
 <circle cx="5.3" cy="10.9" r="2.35"/><circle cx="19" cy="10.9" r="2.35"/><circle cx="12.1" cy="12.9" r="2.35"/>
 <path d="M1.4 16.2 Q5.2 12 9 15.4"/><path d="M23 16.2 Q19.2 12 15.4 15.4"/><path d="M8.6 19 Q12.1 13.6 15.6 19"/>
</svg>
<svg class="a" style="left:82px;top:463px" width="24" height="22" viewBox="0 0 24 22" fill="none" stroke="#c9ced6" stroke-width="1.3">
 <circle cx="8.7" cy="6" r="2.25"/><circle cx="15.5" cy="6" r="2.25"/>
 <circle cx="5.3" cy="10.9" r="2.35"/><circle cx="19" cy="10.9" r="2.35"/><circle cx="12.1" cy="12.9" r="2.35"/>
 <path d="M1.4 16.2 Q5.2 12 9 15.4"/><path d="M23 16.2 Q19.2 12 15.4 15.4"/><path d="M8.6 19 Q12.1 13.6 15.6 19"/>
</svg>
<svg class="a" style="left:84px;top:384px" width="20" height="20" viewBox="0 0 20 20" fill="none" stroke="#c9ced6" stroke-width="1.5">
 <rect x="2.3" y="2.1" width="15.7" height="15.5"/><line x1="6.3" y1="10" x2="14.2" y2="10"/>
</svg>
<svg class="a" style="left:84px;top:424px" width="20" height="20" viewBox="0 0 20 20" fill="none" stroke="#c9ced6" stroke-width="1.5">
 <path d="M2.3 10.3 A7.9 7.9 0 1 0 4.6 4.6"/><polyline points="2.6,2.6 2.6,7.3 7.3,7.3" stroke-width="1.4"/><line x1="2.9" y1="7" x2="5.2" y2="4.7" stroke-width="1.4"/><polyline points="9.9,5 9.9,11 14.6,11"/>
</svg>
<svg class="a" style="left:84px;top:504px" width="20" height="20" viewBox="0 0 20 20" fill="none" stroke="#c9ced6">
 <circle cx="10" cy="10" r="9.3" stroke-width="1"/><circle cx="10" cy="10" r="7.1" stroke-width="1.6"/><circle cx="10" cy="10" r="4.3" stroke-width="1.5"/><circle cx="10" cy="10" r="1.5" fill="#c9ced6" stroke="none"/>
</svg>
<svg class="a" style="left:86px;top:544px" width="17" height="20" viewBox="0 0 17 20" fill="#c9ced6" stroke="#c9ced6" stroke-width=".6" stroke-linejoin="round">
 <path d="M2.1 2.1 L7.9 0.9 L7.9 9.6 Z"/><path d="M9.3 10.6 L12.3 6.2 L15 9.6 Z"/><path d="M9.3 13.3 L15 14.3 L13 17.7 Z"/><path d="M7.9 13.6 L7.9 19 L3.5 17.4 Z"/><path d="M6.9 11.6 L1.1 9.6 L1.1 13.6 Z"/>
</svg>

</body></html>
